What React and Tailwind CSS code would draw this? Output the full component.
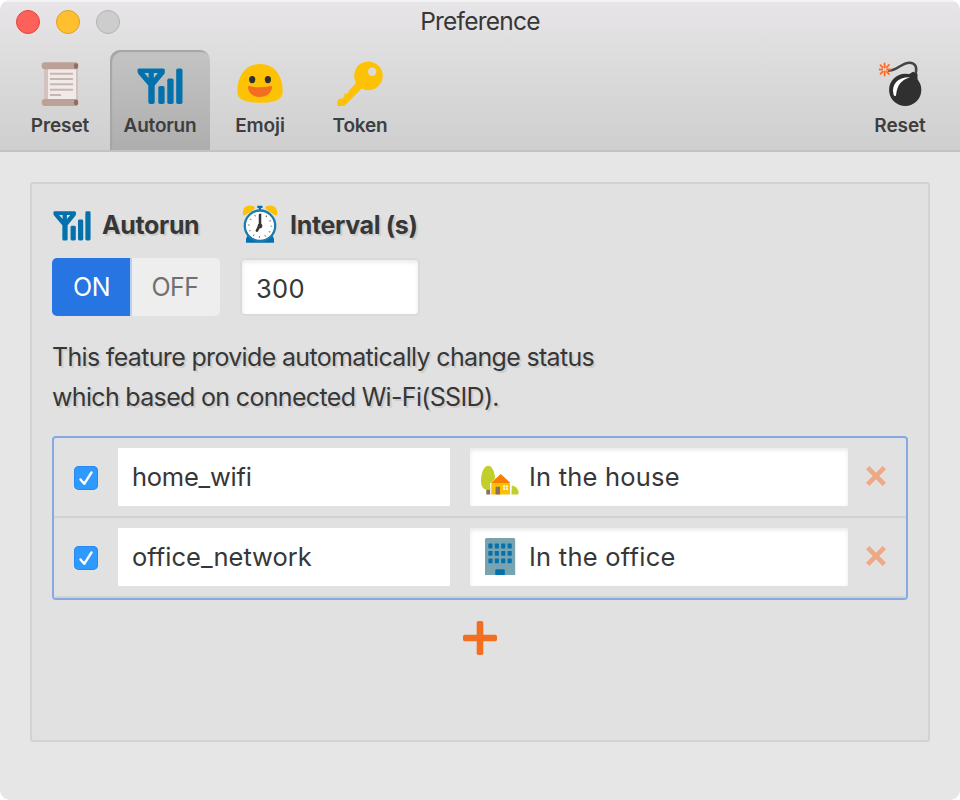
import React from "react";

function Scroll() {
  return (
    <svg width="48" height="48" viewBox="36 60 48 48" aria-hidden="true">
      <path d="M44 67H78V102H44Z" fill="#d4c2bf" />
      <path d="M48 68H76V100H48Z" fill="#f0ebe8" />
      <rect x="41.700" y="62.300" width="36.600" height="7" rx="3" fill="#bca198" />
      <rect x="41.700" y="99" width="36.600" height="7" rx="3" fill="#bca198" />
      <rect x="74" y="63.300" width="4" height="5.500" rx="1.800" fill="#8d6e63" />
      <rect x="74" y="99.800" width="4" height="5.500" rx="1.800" fill="#8d6e63" />
      <path d="M50.700 73.700H72.300M50.700 79H72.300M50.700 84.300H72.300M50.700 89.700H72.300M50.700 95H60.300" stroke="#c9b5af" strokeWidth="2" strokeLinecap="round" />
    </svg>
  );
}

function Signal({ className }) {
  return (
    <svg className={className} viewBox="0 0 48 40" aria-hidden="true">
      <path
        fillRule="evenodd"
        d="M3 1.500H27Q29 1.500 28.900 3.500L28.600 6.500 18.700 18.500V35Q18.700 37 16.700 37H14.300Q12.300 37 12.300 35V18.500L2 6.500 1.400 3.500Q1.200 1.500 3 1.500ZM8.500 6 12.600 11V6ZM17.800 6V11L21.900 6Z"
        fill="#0271ac"
      />
      <rect x="22.300" y="19" width="6.300" height="18" rx="1.800" fill="#0271ac" />
      <rect x="31.300" y="11.500" width="6.300" height="25.500" rx="1.800" fill="#0271ac" />
      <rect x="40.200" y="1.500" width="6.300" height="35.500" rx="1.800" fill="#0271ac" />
    </svg>
  );
}

function Blob() {
  return (
    <svg width="48" height="48" viewBox="236 60 48 48" aria-hidden="true">
      <path d="M260 64C245.500 64 237.300 75.500 237.300 92C237.300 99.500 245.500 102.800 260 102.800S282.700 99.500 282.700 92C282.700 75.500 274.500 64 260 64Z" fill="#fdc205" />
      <ellipse cx="252.200" cy="79.600" rx="3.100" ry="3.700" fill="#2f2f2f" />
      <ellipse cx="267.900" cy="79.600" rx="3.100" ry="3.700" fill="#2f2f2f" />
      <path d="M249.500 86.100Q260 88.500 270.500 86.100Q272.300 85.800 272 88C271 93.500 266.500 97 260 97S249 93.500 248 88Q247.700 85.800 249.500 86.100Z" fill="#f26f21" />
    </svg>
  );
}

function Key() {
  return (
    <svg width="48" height="48" viewBox="336 60 48 48" aria-hidden="true">
      <path
        fillRule="evenodd"
        d="M368.400 61.400A14.400 14.400 0 1 1 361.700 88.600L345.500 104.800Q344.300 106 342.800 106H338.500Q337.300 106 337.300 104.800V101L339.500 98.600 342 98.700 344.300 96.800V94L345.500 93.700 348 93.600 349 90.400 356 83A14.400 14.400 0 0 1 368.400 61.400ZM372.200 67.500A4.200 4.200 0 1 0 372.200 75.900A4.200 4.200 0 1 0 372.200 67.500Z"
        fill="#fdc205"
      />
    </svg>
  );
}

function Bomb() {
  return (
    <svg width="48" height="48" viewBox="876 60 48 48" fill="none" aria-hidden="true">
      <path d="M888 70.300C896 72 901 62.700 909.500 62.700C915 62.700 917.500 67 915.500 74" stroke="#454545" strokeWidth="2.600" />
      <circle cx="905.200" cy="89.900" r="16.100" fill="#303030" />
      <path d="M908.500 74.500 913 71.700 917.500 74V80L914 81Z" fill="#303030" />
      <path d="M893.500 94.500C891.200 84 898 77 910 77.300C901 80.500 897.500 84 896 95.500Q894.500 97 893.500 94.500Z" fill="#fff" />
      <path d="M884.600 67.500V63.500M884.600 71.500V75.500M882.300 69.500H879.600M887 69.500H890.500M882.600 67.300 880.500 65.100M886.600 67.300 889 64.900M882.600 71.700 880.500 73.800M886.600 71.700 889 74" stroke="#fb6d27" strokeWidth="1.800" strokeLinecap="round" />
    </svg>
  );
}

function Clock() {
  return (
    <svg className="-mt-[4px] shrink-0" width="40" height="40" viewBox="240 204 40 40" aria-hidden="true">
      <path d="M243.200 215.500C241.300 208 247 203.300 253.800 206.300Q256 208.500 253 210L245.500 215ZM276.900 215.500C278.800 208 273.100 203.300 266.300 206.300Q264 208.500 267 210L274.500 215Z" fill="#fdc205" />
      <path d="M257.300 205.800H262.500V208H261V213H258.800V208H257.300Z" fill="#0271ac" />
      <path d="M246 242.800V239L248.500 233H271.500L274 239V242.800Z" fill="#0271ac" />
      <circle cx="260" cy="225.700" r="15.200" fill="#fff" stroke="#1b7baf" strokeWidth="2.300" />
      <circle cx="260" cy="225.700" r="11.300" fill="none" stroke="#777" strokeWidth="1.800" strokeDasharray="1 4.917" />
      <path d="M260 225.700V215" stroke="#373737" strokeWidth="2.500" strokeLinecap="round" />
      <path d="M259.600 225.700 256.900 230.700" stroke="#373737" strokeWidth="2.600" strokeLinecap="round" />
      <circle cx="260" cy="226" r="2.400" fill="#373737" />
    </svg>
  );
}

function House() {
  return (
    <svg className="shrink-0" width="40" height="40" viewBox="480 457 40 40" aria-hidden="true">
      <path d="M486.300 489H490.300V494.500H486.300Z" fill="#8d6e63" />
      <path d="M488.300 465.700C484 465.700 481 473 481 480.500C481 487 483.500 490 488.300 490S495.200 487 495.200 480.500C495.200 473 492.300 465.700 488.300 465.700Z" fill="#c0cf2c" />
      <path d="M511.500 486C515 484.500 519.200 490.500 518.700 493Q518.500 494.500 517 494.500H511Z" fill="#c0cf2c" />
      <path d="M490 483.500 500.700 473.200 511.500 483.500V494.700H490.700Z" fill="#fff" />
      <path d="M491.300 483.200H510V494.500H491.300Z" fill="#fcc106" />
      <path d="M500.700 474 509.700 482.200Q510.500 483.300 509 483.300H492.300Q490.800 483.300 491.700 482.200Z" fill="#f77f00" />
      <path d="M495.600 486.700H500V494.500H495.600Z" fill="#8d6e63" />
      <path d="M503 485.400H508V490H503Z" fill="#fff5d5" />
      <path d="M505.500 485.400V490M503 487.700H508" stroke="#fcc106" strokeWidth=".7" />
    </svg>
  );
}

const WINDOW_ROWS = [543.6, 551, 558.4];
const WINDOW_COLUMNS = [488.4, 494.8, 501.2, 507.6];

function Office() {
  return (
    <svg className="shrink-0" width="40" height="40" viewBox="480 537 40 40" aria-hidden="true">
      <path d="M485 575V539.500Q485 538 486.500 538H513.700Q515.200 538 515.200 539.500V575Z" fill="#78a3b1" />
      {WINDOW_ROWS.map((y) =>
        WINDOW_COLUMNS.map((x) => (
          <rect key={`${x}-${y}`} x={x} y={y} width="4.100" height="4.800" rx=".6" fill="#0271ac" />
        ))
      )}
      <path d="M495.300 575V570.500Q495.300 569.300 496.500 569.300H503.600Q504.800 569.300 504.800 570.500V575Z" fill="#0271ac" />
    </svg>
  );
}

function Tab({ icon, label, active, textClass }) {
  return (
    <button
      className={`flex h-[100px] w-[100px] flex-col items-center rounded-t-[10px] pt-[10px] ${
        active
          ? "bg-gradient-to-b from-[#c4c4c4] to-[#aeaeae] shadow-[inset_2px_2px_1px_#a6a6a6]"
          : ""
      }`}
    >
      <span className="flex h-12 w-12 items-center justify-center">{icon}</span>
      <span className={`mt-[6px] whitespace-nowrap text-[19px] font-semibold leading-6 text-[#3e3e3e] ${textClass}`}>
        {label}
      </span>
    </button>
  );
}

function Rule({ network, icon, status, networkClass, statusClass }) {
  return (
    <div className="flex h-20 items-center border-b-2 border-[#d2d2d2] pl-5">
      <span className="mt-[2px] flex h-6 w-6 items-center justify-center rounded-[5px] bg-[#2e9aff] shadow-[inset_0_0_0_1px_#258bf0]">
        <svg width="24" height="24" viewBox="0 0 24 24" fill="none" aria-hidden="true">
          <path d="M6.500 13.500 10.200 17.800 17.500 6.500" stroke="#fff" strokeWidth="2.400" strokeLinecap="round" strokeLinejoin="round" />
        </svg>
      </span>
      <div className="ml-5 flex h-[58px] w-[332px] items-center bg-white pl-[14px]">
        <span className={`whitespace-nowrap text-[25.500px] ${networkClass}`}>{network}</span>
      </div>
      <div className="ml-5 flex h-[58px] w-[378px] items-center bg-white pl-[10px] shadow-[inset_0_2px_4px_#e8e8e8]">
        {icon}
        <span className={`ml-[9px] whitespace-nowrap text-[25.500px] ${statusClass}`}>{status}</span>
      </div>
      <svg className="ml-[17px]" width="22" height="24" viewBox="0 0 22 24" fill="none" aria-hidden="true">
        <path d="M2.700 2.700 19.300 19.300M19.300 2.700 2.700 19.300" stroke="#eda885" strokeWidth="4.600" />
      </svg>
    </div>
  );
}

export default function App() {
  return (
    <div className="h-[800px] w-[960px] bg-white font-['Inter','Liberation_Sans',sans-serif] text-[#373737]">
      <div className="flex h-full flex-col overflow-hidden rounded-[10px] bg-[#e6e6e6]">
        <header className="flex h-[152px] flex-col border-b-2 border-t-2 border-b-[#c2c2c2] border-t-[#f3f3f3] bg-gradient-to-b from-[#e7e5e7] to-[#cfcfcf]">
          <div className="grid h-12 grid-cols-3">
            <div className="flex gap-4 pl-4 pt-2">
              <span className="h-6 w-6 rounded-full border border-[#e2443f] bg-[#fe605a]" />
              <span className="h-6 w-6 rounded-full border border-[#df9f27] bg-[#ffc030]" />
              <span className="h-6 w-6 rounded-full border border-[#b3b1b3] bg-[#cecdce]" />
            </div>
            <h1 className="whitespace-nowrap pt-px text-center text-[24.500px] leading-9 tracking-[-0.750px]">Preference</h1>
          </div>
          <nav className="flex px-[10px]">
            <Tab icon={<Scroll />} label="Preset" textClass="tracking-[-0.100px]" />
            <Tab icon={<Signal className="mt-[6px] h-10 w-12" />} label="Autorun" active textClass="tracking-[-0.200px]" />
            <Tab icon={<Blob />} label="Emoji" textClass="tracking-[-0.100px]" />
            <Tab icon={<Key />} label="Token" textClass="tracking-[-0.200px]" />
            <div className="ml-auto">
              <Tab icon={<Bomb />} label="Reset" textClass="tracking-[-0.100px]" />
            </div>
          </nav>
        </header>

        <main className="mx-[30px] mt-[30px] h-[560px] rounded-[3px] border-2 border-[#d2d2d2] bg-[#e1e1e1] px-5 pt-5">
          <div className="flex gap-5 [text-shadow:2px_2px_1px_#00000018]">
            <section className="w-[168px]">
              <h2 className="flex h-[42px] items-center whitespace-nowrap pt-[2px] text-[25px] font-bold tracking-[-0.350px]">
                <Signal className="mr-[10px] h-[33px] w-[40px] shrink-0" />
                Autorun
              </h2>
              <div className="mt-3 flex h-[58px] overflow-hidden rounded-[5px] text-[25px] leading-[58px] tracking-[-0.500px]">
                <button className="w-[80px] border-r-2 border-[#b7cff3] bg-[#2774e3] pl-px text-white">ON</button>
                <button className="flex-1 bg-[#eee] pr-[2px] text-[#707070]">OFF</button>
              </div>
            </section>
            <section>
              <h2 className="flex h-[42px] items-center whitespace-nowrap pt-[2px] text-[25px] font-bold tracking-[-0.350px]">
                <Clock />
                <span className="ml-[10px]">Interval (s)</span>
              </h2>
              <div className="mt-3 flex h-[58px] w-[180px] items-center rounded-[5px] border-2 border-[#dadada] bg-white pl-[14px] pt-1 text-[25.500px] tracking-[0.300px] shadow-[inset_0_2px_4px_#e8e8e8] [text-shadow:none]">
                300
              </div>
            </section>
          </div>
          <p className="mt-[21px] whitespace-nowrap text-[25px] leading-10 tracking-[-0.670px] [text-shadow:2px_2px_1px_#00000018]">
            <span className="block">This feature provide automatically change status</span>
            <span className="block">which based on connected Wi-Fi(SSID).</span>
          </p>
          <div className="mt-[19px] rounded-[4px] border-2 border-[#86a9e3]">
            <Rule network="home_wifi" icon={<House />} status="In the house" networkClass="tracking-[-0.250px]" statusClass="tracking-[0.200px]" />
            <Rule network="office_network" icon={<Office />} status="In the office" networkClass="tracking-[0.020px]" statusClass="tracking-[0.250px]" />
          </div>
          <button className="mx-auto mt-5 flex h-9 w-9 items-center justify-center" aria-label="Add rule">
            <svg width="36" height="36" viewBox="0 0 36 36" fill="#f26f21" aria-hidden="true">
              <rect x="14.700" y="1" width="6.600" height="34" rx="1.800" />
              <rect x="1" y="14.700" width="34" height="6.600" rx="1.800" />
            </svg>
          </button>
        </main>
      </div>
    </div>
  );
}
